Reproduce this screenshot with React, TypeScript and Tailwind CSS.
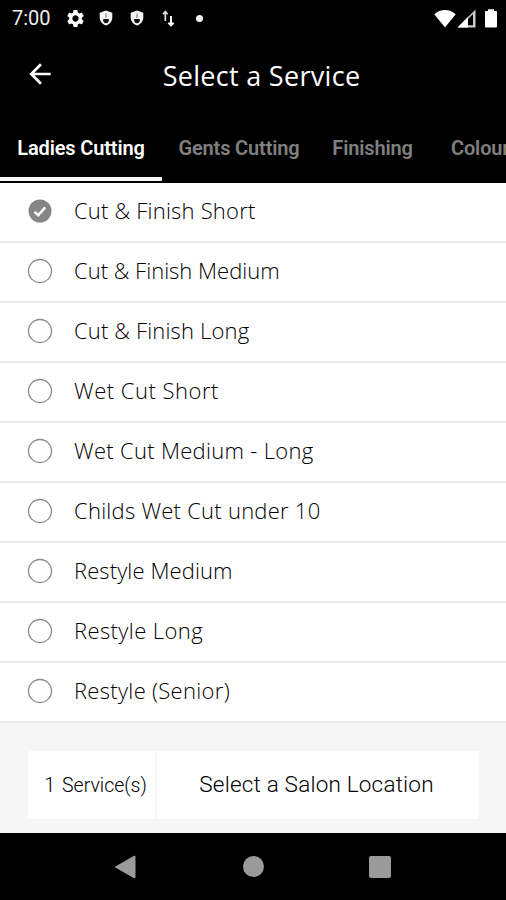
import React from 'react';
import { MdArrowBack, MdSettings } from 'react-icons/md';

const services = [
  { name: 'Cut & Finish Short', tracking: 'tracking-[0.2px]', selected: true },
  { name: 'Cut & Finish Medium', tracking: 'tracking-[0px]' },
  { name: 'Cut & Finish Long', tracking: 'tracking-[0.15px]' },
  { name: 'Wet Cut Short', tracking: 'tracking-[0.5px]' },
  { name: 'Wet Cut Medium - Long', tracking: 'tracking-[0.3px]' },
  { name: 'Childs Wet Cut under 10', tracking: 'tracking-[0.25px]' },
  { name: 'Restyle Medium', tracking: 'tracking-[0.1px]' },
  { name: 'Restyle Long', tracking: 'tracking-[0.4px]' },
  { name: 'Restyle (Senior)', tracking: 'tracking-[0.3px]' },
];

const ShieldIcon: React.FC = () => (
  <svg width="14" height="16" viewBox="0 0 14 16">
    <path d="M7 0.5L13.3 2.8V7.5C13.3 11.2 10.6 14.4 7 15.5C3.4 14.4 0.7 11.2 0.7 7.5V2.8Z" fill="#f5f5f5" />
    <path d="M6.3 3.5H7.7V8H6.3Z" fill="#999" />
    <path d="M4.2 9H9.8V10.2C9.8 11.9 8.6 13.2 7 13.2S4.2 11.9 4.2 10.2Z" fill="#111" />
  </svg>
);

const StatusBar: React.FC = () => (
  <div className="flex h-9 items-center pl-3 pr-2">
    <span className="w-[53px] text-[20px] leading-none text-[#eee]">7:00</span>
    <MdSettings size={21} color="#fff" />
    <div className="ml-[13px] flex items-center gap-[17px]">
      <ShieldIcon />
      <ShieldIcon />
    </div>
    <svg className="ml-[18px]" width="13" height="17" viewBox="0 0 13 17">
      <path d="M3.3 11V2M1 4.2L3.3 1.6L5.6 4.2" fill="none" stroke="#ddd" strokeWidth="1.7" />
      <path d="M9 6V15M6.4 12.7L9 15.3L11.6 12.7" fill="none" stroke="#f5f5f5" strokeWidth="2" />
    </svg>
    <span className="ml-[21px] size-[7px] rounded-full bg-[#f5f5f5]" />
    <div className="ml-auto flex items-center">
      <svg width="22" height="19" viewBox="0 0 22 19">
        <path d="M0.3 5.2C6 -0.5 16 -0.5 21.7 5.2L11 18.5Z" fill="#fff" />
      </svg>
      <svg className="ml-px" width="19" height="19" viewBox="0 0 19 19">
        <path fillRule="evenodd" d="M0.5 18.5L18.5 0.5V18.5ZM11 10V16.3H16V5Z" fill="#ccc" />
        <path d="M0.5 18.5L11 8V18.5Z" fill="#fff" />
      </svg>
      <svg className="ml-2" width="14" height="19" viewBox="0 0 14 19">
        <path d="M4 0.3H10V2H12C12.7 2 13 2.4 13 3V17.5C13 18.2 12.6 18.6 12 18.6H2C1.4 18.6 1 18.2 1 17.5V3C1 2.4 1.4 2 2 2H4Z" fill="#fff" />
      </svg>
    </div>
  </div>
);

const Tabs: React.FC = () => (
  <nav className="flex h-[69px] overflow-hidden whitespace-nowrap text-xl font-semibold tracking-[-0.15px] text-[#808080]">
    <button className="flex w-[162px] shrink-0 flex-col items-center justify-between pt-[19px] pb-0.5 text-white">
      <span className="leading-[30px]">Ladies Cutting</span>
      <span className="h-1 w-full bg-[#f5f5f5]" />
    </button>
    <button className="w-[154px] shrink-0 pb-px">Gents Cutting</button>
    <button className="w-[113px] shrink-0 pb-px">Finishing</button>
    <button className="shrink-0 pb-px pl-[22px]">Colour</button>
  </nav>
);

const RadioMark: React.FC<{ selected?: boolean }> = ({ selected }) => (
  <svg className="shrink-0" width="26" height="26" viewBox="0 0 26 26">
    {selected ? (
      <>
        <circle cx="13" cy="13" r="11.5" fill="#858585" />
        <path d="M7.5 13.8L11.2 17.2L18.3 9.3" fill="none" stroke="#fff" strokeWidth="2.5" />
      </>
    ) : (
      <circle cx="13" cy="13" r="11.5" fill="none" stroke="#8a8a8a" strokeWidth="1.3" />
    )}
  </svg>
);

const App: React.FC = () => {
  return (
    <div className="flex h-[900px] w-[506px] flex-col overflow-hidden bg-white font-[Roboto,sans-serif]">
      <header className="h-[183px] shrink-0 bg-black text-white">
        <StatusBar />
        <div className="flex h-[78px] items-center px-6 pb-0.5">
          <MdArrowBack className="shrink-0" size={32} />
          <h1 className="flex-1 pr-[15px] pt-0.5 text-center font-['Open_Sans',sans-serif] text-[27px] leading-none tracking-[0.3px]">
            Select a Service
          </h1>
        </div>
        <Tabs />
      </header>

      <ul className="shrink-0">
        {services.map((service) => (
          <li key={service.name} className="flex h-[60px] items-center border-b-2 border-[#e9e9e9] pb-0.5 pl-[27px]">
            <RadioMark selected={service.selected} />
            <span className={`ml-[21px] pb-0.5 font-['Open_Sans',sans-serif] text-[22px] leading-none font-[340] text-black ${service.tracking}`}>
              {service.name}
            </span>
          </li>
        ))}
      </ul>

      <footer className="h-[110px] shrink-0 bg-[#f6f6f6] px-7 pt-7">
        <div className="flex h-[68px] w-[451px] rounded-xs bg-white text-black">
          <div className="flex w-[129px] items-center justify-center gap-[7px] border-r-2 border-[#f6f6f6] pt-px pl-2 text-[19.5px] font-[350]">
            <span>1</span>
            <span>Service(s)</span>
          </div>
          <button className="flex-1 pr-[3px] text-[22.5px] font-[350] tracking-[0.2px]">Select a Salon Location</button>
        </div>
      </footer>

      <div className="flex flex-1 items-center justify-between bg-black pr-[115px] pl-[114px]">
        <svg width="22" height="24" viewBox="0 0 22 24">
          <path d="M0.5 12L20 0.8Q21.5 0.3 21.5 2V22Q21.5 23.7 20 23.2Z" fill="#9a9a9a" />
        </svg>
        <span className="ml-px size-[21px] rounded-full bg-[#9a9a9a]" />
        <span className="size-[22px] rounded-xs bg-[#9a9a9a]" />
      </div>
    </div>
  );
};

export default App;
